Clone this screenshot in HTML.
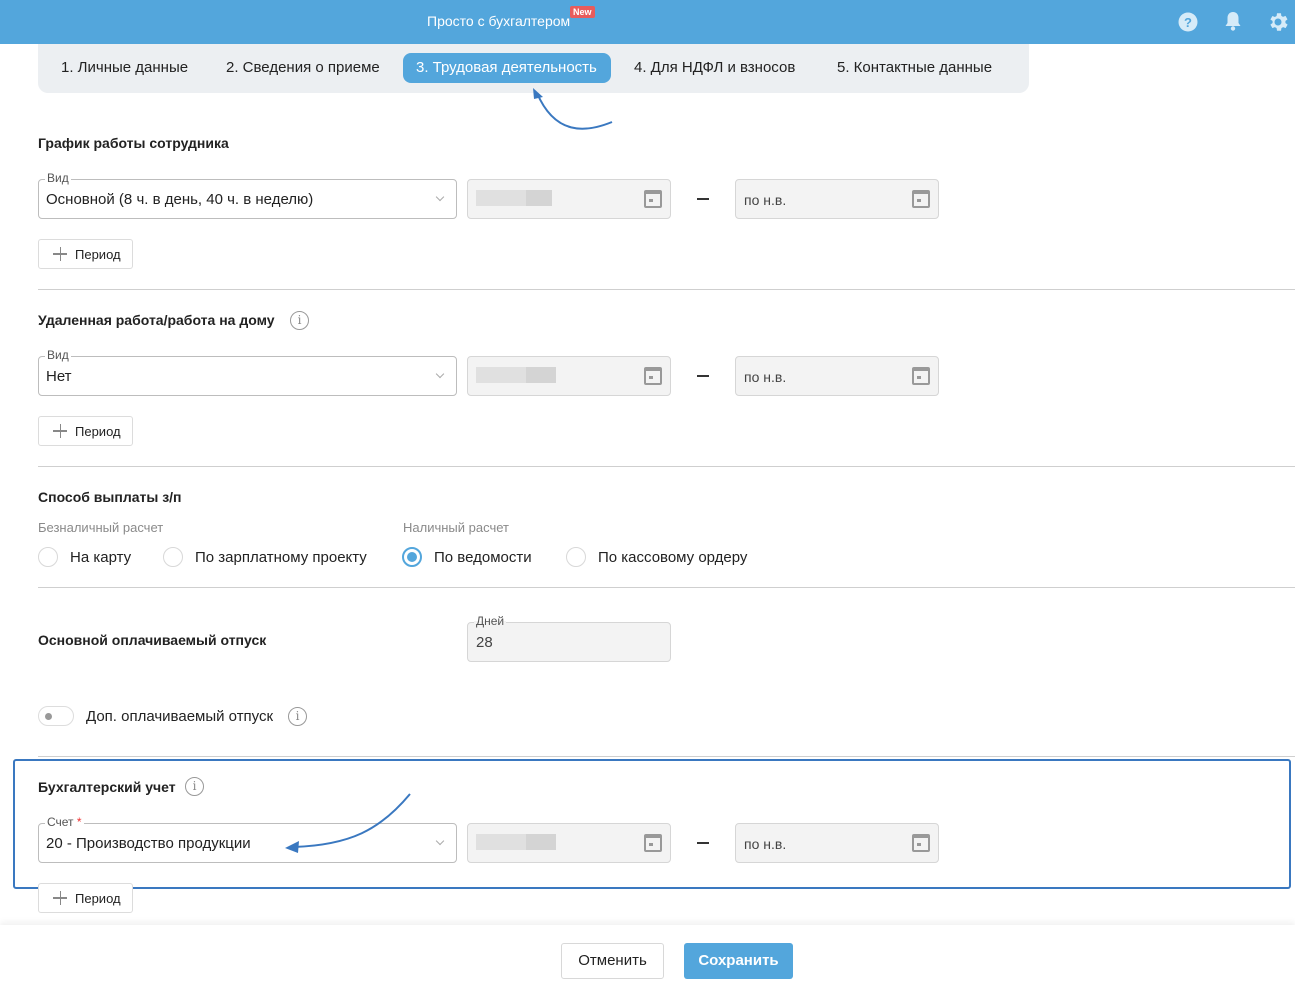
<!DOCTYPE html>
<html><head><meta charset="utf-8"><style>
*{box-sizing:border-box;margin:0;padding:0}
body{width:1295px;height:991px;position:relative;overflow:hidden;background:#fff;font-family:"Liberation Sans","Noto Sans CJK SC",sans-serif;color:#222;font-size:15px}
.a{position:absolute}
.hdr{left:0;top:0;width:1295px;height:44px;background:#53a6dc}
.tabs{left:38px;top:44px;width:991px;height:49px;background:#eceff2;border-radius:0 0 10px 10px}
.tab{top:53px;height:30px;line-height:30px;font-size:15px;padding:0 13px;border-radius:8px;color:#222}
.h{font-weight:bold;font-size:14px;color:#222}
.sel{border:1px solid #bdbdbd;border-radius:4px;height:40px;width:419px;left:38px;background:#fff}
.sel .lab{position:absolute;left:6px;top:-9px;background:#fff;padding:0 2px;font-size:12px;color:#555}
.sel .v{position:absolute;left:7px;top:11px;font-size:15px}
.chev{position:absolute;right:13px;top:14px;width:6px;height:6px;border-right:1.5px solid #aaa;border-bottom:1.5px solid #aaa;transform:rotate(45deg)}
.dt{border:1px solid #d6d6d6;border-radius:4px;height:40px;width:204px;background:#f3f3f3}
.blur{position:absolute;left:8px;top:10px;width:76px;height:16px;background:linear-gradient(90deg,#e0e0e0 0 50px,#d4d4d4 50px)}
.cal{position:absolute;right:8px;top:10px;width:18px;height:18px;border:2px solid #999;border-top-width:4px;border-radius:2px}
.cal:after{content:"";position:absolute;left:3px;top:5px;width:4px;height:3px;background:#999}
.dt .t{position:absolute;left:8px;top:12px;font-size:14px;color:#444}
.dash{width:12px;height:1.5px;background:#333}
.btn{border:1px solid #dcdcdc;border-radius:3px;width:95px;height:30px;left:38px;background:#fff;font-size:13px;line-height:29px;padding-left:36px}
.btn:before{content:"";position:absolute;left:14px;top:13px;width:14px;height:1.5px;background:#888}
.btn:after{content:"";position:absolute;left:20.5px;top:7px;width:1.5px;height:14px;background:#888}
.ln{left:38px;width:1257px;height:1px;background:#cfcfcf}
.rad{width:20px;height:20px;border:1px solid #d8d8d8;border-radius:50%}
.info{width:19px;height:19px;border:1.5px solid #999;border-radius:50%;font-size:12px;color:#888;text-align:center;line-height:16px;font-family:"DejaVu Serif",serif}
.sub{font-size:13px;color:#8a8a8a}
</style></head><body>
<div class="a hdr"></div>
<div class="a" style="left:427px;top:13px;color:#fff;font-size:14px">Просто с бухгалтером</div>
<div class="a" style="left:570px;top:6px;background:#e85c5c;color:#fff;font-size:9px;font-weight:bold;padding:1px 3px;border-radius:2px">New</div>
<svg class="a" style="left:1178px;top:12px" width="20" height="20" viewBox="0 0 20 20"><circle cx="10" cy="10" r="9.5" fill="#d6ebf8"/><text x="10" y="15" font-size="13" font-weight="bold" fill="#53a6dc" text-anchor="middle" font-family="Liberation Sans">?</text></svg>
<svg class="a" style="left:1224px;top:11px" width="18" height="21" viewBox="0 0 18 21"><path d="M9 1c-3.5 0-5.5 2.6-5.5 6v5L1.5 15h15l-2-3V7C14.5 3.6 12.5 1 9 1z" fill="#d6ebf8"/><circle cx="9" cy="17.5" r="2.2" fill="#d6ebf8"/></svg>
<svg class="a" style="left:1266px;top:10px" width="24" height="24" viewBox="0 0 24 24"><path fill="#d6ebf8" d="M19.4 13a7.5 7.5 0 000-2l2.1-1.6-2-3.5-2.5 1a7.6 7.6 0 00-1.7-1L15 3.2h-4L10.6 6a7.6 7.6 0 00-1.7 1l-2.5-1-2 3.5L6.6 11a7.5 7.5 0 000 2l-2.2 1.6 2 3.5 2.5-1c.5.4 1.1.7 1.7 1l.4 2.7h4l.4-2.7c.6-.3 1.2-.6 1.7-1l2.5 1 2-3.5zM12 15.5a3.5 3.5 0 110-7 3.5 3.5 0 010 7z"/></svg>

<div class="a tabs"></div>
<div class="a tab" style="left:48px">1. Личные данные</div>
<div class="a tab" style="left:213px">2. Сведения о приеме</div>
<div class="a tab" style="left:403px;width:208px;background:#53a6dc;color:#fff">3. Трудовая деятельность</div>
<div class="a tab" style="left:621px">4. Для НДФЛ и взносов</div>
<div class="a tab" style="left:824px">5. Контактные данные</div>
<svg class="a" style="left:525px;top:85px" width="95" height="50"><path d="M87 37C60 48 30 50 12 8" fill="none" stroke="#3a78c0" stroke-width="2"/><path d="M8 3l10 9-9 2z" fill="#3a78c0"/></svg>

<div class="a h" style="left:38px;top:135px">График работы сотрудника</div>
<div class="a sel" style="top:179px"><span class="lab">Вид</span><span class="v">Основной (8 ч. в день, 40 ч. в неделю)</span><i class="chev"></i></div>
<div class="a dt" style="left:467px;top:179px"><i class="blur"></i><i class="cal"></i></div>
<div class="a dash" style="left:697px;top:198px"></div>
<div class="a dt" style="left:735px;top:179px"><span class="t">по н.в.</span><i class="cal"></i></div>
<div class="a btn" style="top:239px">Период</div>
<div class="a ln" style="top:289px"></div>

<div class="a h" style="left:38px;top:312px">Удаленная работа/работа на дому</div>
<div class="a info" style="left:290px;top:311px">i</div>
<div class="a sel" style="top:356px"><span class="lab">Вид</span><span class="v">Нет</span><i class="chev"></i></div>
<div class="a dt" style="left:467px;top:356px"><i class="blur" style="top:10px;width:80px"></i><i class="cal"></i></div>
<div class="a dash" style="left:697px;top:375px"></div>
<div class="a dt" style="left:735px;top:356px"><span class="t">по н.в.</span><i class="cal"></i></div>
<div class="a btn" style="top:416px">Период</div>
<div class="a ln" style="top:466px"></div>

<div class="a h" style="left:38px;top:489px">Способ выплаты з/п</div>
<div class="a sub" style="left:38px;top:520px">Безналичный расчет</div>
<div class="a sub" style="left:403px;top:520px">Наличный расчет</div>
<div class="a rad" style="left:38px;top:547px"></div><div class="a" style="left:70px;top:549px">На карту</div>
<div class="a rad" style="left:163px;top:547px"></div><div class="a" style="left:195px;top:549px">По зарплатному проекту</div>
<div class="a rad" style="left:402px;top:547px;border:2px solid #53a6dc"><i class="a" style="left:3px;top:3px;width:10px;height:10px;border-radius:50%;background:#53a6dc"></i></div><div class="a" style="left:434px;top:549px">По ведомости</div>
<div class="a rad" style="left:566px;top:547px"></div><div class="a" style="left:598px;top:549px">По кассовому ордеру</div>
<div class="a ln" style="top:587px"></div>

<div class="a h" style="left:38px;top:632px">Основной оплачиваемый отпуск</div>
<div class="a dt" style="left:467px;top:622px;height:40px"><span class="a" style="left:6px;top:-9px;font-size:12px;color:#555;background:linear-gradient(#fff 50%,#f3f3f3 50%);padding:0 2px">Дней</span><span class="t" style="font-size:15px;top:11px">28</span></div>

<div class="a" style="left:38px;top:706px;width:36px;height:20px;border:1px solid #ddd;border-radius:10px"><i class="a" style="left:6px;top:6px;width:7px;height:7px;border-radius:50%;background:#999"></i></div>
<div class="a" style="left:86px;top:708px">Доп. оплачиваемый отпуск</div>
<div class="a info" style="left:288px;top:707px">i</div>
<div class="a ln" style="top:756px"></div>

<div class="a" style="left:13px;top:759px;width:1278px;height:130px;border:2px solid #3a78c0;border-radius:3px"></div>
<div class="a h" style="left:38px;top:779px">Бухгалтерский учет</div>
<div class="a info" style="left:185px;top:777px">i</div>
<div class="a sel" style="top:823px"><span class="lab">Счет <span style="color:#e33">*</span></span><span class="v">20 - Производство продукции</span><i class="chev"></i></div>
<div class="a dt" style="left:467px;top:823px"><i class="blur" style="width:80px"></i><i class="cal"></i></div>
<div class="a dash" style="left:697px;top:842px"></div>
<div class="a dt" style="left:735px;top:823px"><span class="t">по н.в.</span><i class="cal"></i></div>
<svg class="a" style="left:280px;top:790px" width="135" height="65"><path d="M130 4C100 40 70 55 14 57" fill="none" stroke="#3a78c0" stroke-width="2"/><path d="M5 58l14-7-1 12z" fill="#3a78c0"/></svg>
<div class="a btn" style="top:883px">Период</div>

<div class="a" style="left:0;top:925px;width:1295px;height:66px;background:#fff;box-shadow:0 -3px 6px rgba(0,0,0,.06)"></div>
<div class="a" style="left:561px;top:943px;width:103px;height:36px;border:1px solid #d8d8d8;border-radius:3px;text-align:center;line-height:34px;font-size:15px">Отменить</div>
<div class="a" style="left:684px;top:943px;width:109px;height:36px;background:#53a6dc;border-radius:3px;text-align:center;line-height:36px;font-size:15px;color:#fff;font-weight:bold">Сохранить</div>
</body></html>
